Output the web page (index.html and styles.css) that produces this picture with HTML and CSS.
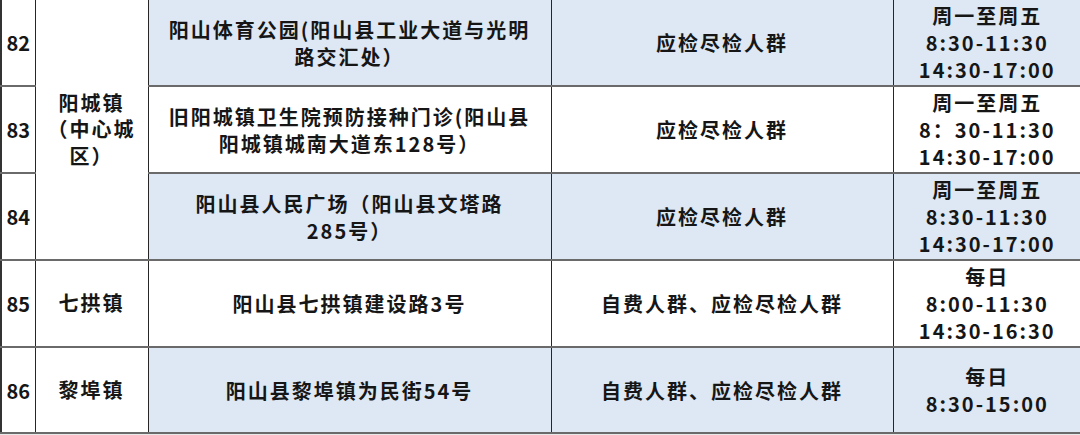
FILE: index.html
```html
<!DOCTYPE html>
<html lang="zh-CN">
<head>
<meta charset="utf-8">
<link rel="stylesheet" href="styles.css">
</head>
<body>
<table class="sites">
  <colgroup>
    <col class="c-num"><col class="c-town"><col class="c-addr"><col class="c-people"><col class="c-time">
  </colgroup>
  <tbody>
    <tr class="row blue first">
      <td class="num">82</td>
      <td class="town" rowspan="3">阳城镇<br>（中心城<br>区）</td>
      <td class="addr">阳山体育公园(阳山县工业大道与光明<br>路交汇处）</td>
      <td class="people">应检尽检人群</td>
      <td class="time">周一至周五<br>8:30-11:30<br>14:30-17:00</td>
    </tr>
    <tr class="row">
      <td class="num">83</td>
      <td class="addr">旧阳城镇卫生院预防接种门诊(阳山县<br>阳城镇城南大道东128号）</td>
      <td class="people">应检尽检人群</td>
      <td class="time">周一至周五<br>8：30-11:30<br>14:30-17:00</td>
    </tr>
    <tr class="row blue">
      <td class="num">84</td>
      <td class="addr">阳山县人民广场（阳山县文塔路<br>285号）</td>
      <td class="people">应检尽检人群</td>
      <td class="time">周一至周五<br>8:30-11:30<br>14:30-17:00</td>
    </tr>
    <tr class="row">
      <td class="num">85</td>
      <td class="town">七拱镇</td>
      <td class="addr">阳山县七拱镇建设路3号</td>
      <td class="people">自费人群、应检尽检人群</td>
      <td class="time">每日<br>8:00-11:30<br>14:30-16:30</td>
    </tr>
    <tr class="row blue last">
      <td class="num">86</td>
      <td class="town">黎埠镇</td>
      <td class="addr">阳山县黎埠镇为民街54号</td>
      <td class="people">自费人群、应检尽检人群</td>
      <td class="time">每日<br>8:30-15:00</td>
    </tr>
  </tbody>
</table>
</body>
</html>
```

FILE: styles.css
```css
html, body {
  margin: 0;
  padding: 0;
  background: #e9e9e9;
}
body {
  width: 1080px;
  height: 435px;
  overflow: hidden;
  font-family: "Noto Sans CJK SC", "Noto Sans", sans-serif;
}
.sites {
  width: 1080px;
  table-layout: fixed;
  border-collapse: collapse;
  background: #ffffff;
  color: #161616;
  font-size: 20px;
  font-weight: 700;
  line-height: 27px;
  letter-spacing: 2px;
}
.c-num { width: 34px; }
.c-town { width: 113px; }
.c-addr { width: 403px; }
.c-people { width: 342px; }
.c-time { width: 188px; }

.sites td {
  padding: 0 4px;
  text-align: center;
  vertical-align: middle;
  border-left: 1px solid #262626;
  border-bottom: 2px solid #6a6a6a;
}
.sites td.num {
  border-left: 2px solid #333;
  letter-spacing: 0;
  padding: 0;
}
.row { height: 87px; }
.row.first { height: 86px; }
.row.last { height: 86px; }
.row.blue .addr,
.row.blue .people,
.row.blue .time {
  background: #dde8f4;
}
.town { line-height: 26.5px; }
```
